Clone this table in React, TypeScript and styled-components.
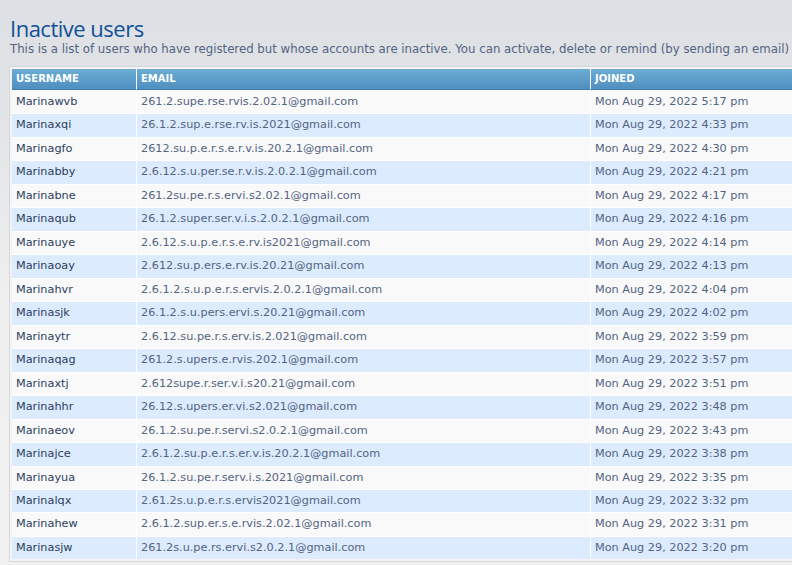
import React from "react";
import styled, { createGlobalStyle } from "styled-components";

const GlobalStyle = createGlobalStyle`
  html, body { margin: 0; padding: 0; }
  body {
    background: linear-gradient(#DDE0E4 0px, #E2E4E7 120px, #EFEFEF 300px, #F1F1F1 565px);
    font-family: "DejaVu Sans", Verdana, sans-serif;
    overflow: hidden;
    min-height: 565px;
  }
`;

const Page = styled.main`
  width: 900px;
  padding: 14px 0 0 10px;
`;

const Title = styled.h1`
  margin: 0;
  font-family: "Open Sans", "Trebuchet MS", sans-serif;
  font-weight: 400;
  font-size: 22px;
  letter-spacing: -0.5px;
  line-height: 28px;
  color: #115098;
`;

const Description = styled.p`
  margin: 0 0 9px 0;
  font-size: 11.75px;
  line-height: 15px;
  color: #536482;
  white-space: nowrap;
`;

const Panel = styled.div`
  margin-left: -1px;
  border: 1px solid #D5D8DC;
  background: #F3F3F3;
  padding: 2px;
`;

const Table = styled.table`
  border-collapse: separate;
  border-spacing: 0;
  width: 100%;
  font-size: 11.25px;
`;

const Th = styled.th<{ $w?: number }>`
  width: ${(p) => (p.$w ? `${p.$w}px` : "auto")};
  text-align: left;
  text-transform: uppercase;
  font-weight: bold;
  font-size: 10px;
  color: #FFFFFF;
  padding: 4px 4px 4px 4px;
  height: 12px;
  line-height: 12px;
  background: linear-gradient(#6BADD4, #4F8FC0);
  border-bottom: 1px solid #3D7CAE;
  border-left: 1px solid #FFFFFF;
  &:first-child { border-left: none; }
`;

const Row = styled.tr<{ $alt: boolean }>`
  background: ${(p) => (p.$alt ? "#DCEBFE" : "#F9F9F9")};
`;

const Td = styled.td<{ $strong?: boolean }>`
  padding: 4px 4px;
  height: 14.47px;
  line-height: 14.47px;
  color: ${(p) => (p.$strong ? "#2B3D60" : "#536482")};
  border-top: 1px solid #FFFFFF;
  border-left: 1px solid #FFFFFF;
  white-space: nowrap;
  &:first-child { border-left: none; }
`;

const users: [string, string, string][] = [
  ["Marinawvb", "261.2.supe.rse.rvis.2.02.1@gmail.com", "5:17 pm"],
  ["Marinaxqi", "26.1.2.sup.e.rse.rv.is.2021@gmail.com", "4:33 pm"],
  ["Marinagfo", "2612.su.p.e.r.s.e.r.v.is.20.2.1@gmail.com", "4:30 pm"],
  ["Marinabby", "2.6.12.s.u.per.se.r.v.is.2.0.2.1@gmail.com", "4:21 pm"],
  ["Marinabne", "261.2su.pe.r.s.ervi.s2.02.1@gmail.com", "4:17 pm"],
  ["Marinaqub", "26.1.2.super.ser.v.i.s.2.0.2.1@gmail.com", "4:16 pm"],
  ["Marinauye", "2.6.12.s.u.p.e.r.s.e.rv.is2021@gmail.com", "4:14 pm"],
  ["Marinaoay", "2.612.su.p.ers.e.rv.is.20.21@gmail.com", "4:13 pm"],
  ["Marinahvr", "2.6.1.2.s.u.p.e.r.s.ervis.2.0.2.1@gmail.com", "4:04 pm"],
  ["Marinasjk", "26.1.2.s.u.pers.ervi.s.20.21@gmail.com", "4:02 pm"],
  ["Marinaytr", "2.6.12.su.pe.r.s.erv.is.2.021@gmail.com", "3:59 pm"],
  ["Marinaqag", "261.2.s.upers.e.rvis.202.1@gmail.com", "3:57 pm"],
  ["Marinaxtj", "2.612supe.r.ser.v.i.s20.21@gmail.com", "3:51 pm"],
  ["Marinahhr", "26.12.s.upers.er.vi.s2.021@gmail.com", "3:48 pm"],
  ["Marinaeov", "26.1.2.su.pe.r.servi.s2.0.2.1@gmail.com", "3:43 pm"],
  ["Marinajce", "2.6.1.2.su.p.e.r.s.er.v.is.20.2.1@gmail.com", "3:38 pm"],
  ["Marinayua", "26.1.2.su.pe.r.serv.i.s.2021@gmail.com", "3:35 pm"],
  ["Marinalqx", "2.61.2s.u.p.e.r.s.ervis2021@gmail.com", "3:32 pm"],
  ["Marinahew", "2.6.1.2.sup.er.s.e.rvis.2.02.1@gmail.com", "3:31 pm"],
  ["Marinasjw", "261.2s.u.pe.rs.ervi.s2.0.2.1@gmail.com", "3:20 pm"],
];

export default function App() {
  return (
    <>
      <GlobalStyle />
      <Page>
        <Title>Inactive users</Title>
        <Description>
          This is a list of users who have registered but whose accounts are inactive. You can activate, delete or remind (by sending an email)
        </Description>
        <Panel>
          <Table>
            <thead>
              <tr>
                <Th $w={116}>Username</Th>
                <Th $w={445}>Email</Th>
                <Th>Joined</Th>
              </tr>
            </thead>
            <tbody>
              {users.map(([name, email, time], i) => (
                <Row key={name} $alt={i % 2 === 1}>
                  <Td $strong>{name}</Td>
                  <Td>{email}</Td>
                  <Td>Mon Aug 29, 2022 {time}</Td>
                </Row>
              ))}
            </tbody>
          </Table>
        </Panel>
      </Page>
    </>
  );
}
